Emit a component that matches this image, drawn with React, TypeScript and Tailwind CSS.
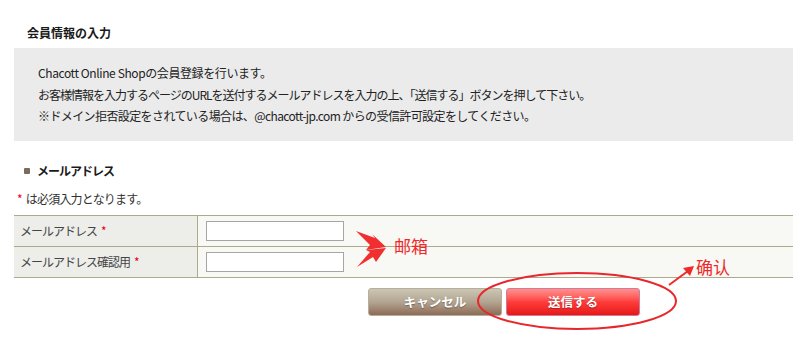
const jp = { fontFamily: '"Noto Sans CJK JP", "Noto Sans", sans-serif' };
const cn = { fontFamily: '"Noto Sans CJK SC", "Noto Sans", sans-serif' };

function Req() {
  return <span className="ml-1 text-[#e60012]">*</span>;
}

export default function App() {
  return (
    <div
      className="relative h-[343px] w-[793px] overflow-hidden bg-white text-[12px] text-[#333]"
      style={jp}
    >
      {/* page heading */}
      <h2 className="pl-[27px] pt-[25px] text-[12px] font-bold leading-4 text-[#1a1a1a]">
        会員情報の入力
      </h2>

      {/* info box */}
      <div className="ml-[14px] mt-[7px] h-[93px] bg-[#ebebeb] pl-[24px] pt-[14px] text-[12px] leading-[21.5px] text-[#222]">
        <p className="tracking-[-0.4px]">Chacott Online Shopの会員登録を行います。</p>
        <p className="tracking-[-1px]">お客様情報を入力するページのURLを送付するメールアドレスを入力の上、「送信する」ボタンを押して下さい。</p>
        <p className="tracking-[-0.6px]">※ドメイン拒否設定をされている場合は、@chacott-jp.com からの受信許可設定をしてください。</p>
      </div>

      {/* section heading */}
      <div className="mt-[22px] flex items-center gap-[7px] pl-[24px] leading-4">
        <span className="h-[6px] w-[6px] rounded-[1px] bg-[#7b6b5c]" />
        <span className="font-bold tracking-[-1px] text-[#1a1a1a]">メールアドレス</span>
      </div>

      <p className="mt-[12px] pl-[17px] leading-4 tracking-[-0.8px] text-[#333]">
        <span className="mr-1 text-[#e60012]">*</span>は必須入力となります。
      </p>

      {/* form table */}
      <table className="ml-[14px] mt-[8px] w-[779px] border-collapse">
        <tbody>
          <tr className="h-[31px]">
            <th className="w-[183px] border border-l-0 border-[#abab8c] bg-[#ededea] pl-[6px] text-left font-normal tracking-[-1px] text-[#444]">
              メールアドレス<Req />
            </th>
            <td className="border border-r-0 border-[#abab8c] bg-[#f8f8f5] pl-[8px]">
              <input className="block h-[20px] w-[138px] border border-[#a6a6a6] bg-white" />
            </td>
          </tr>
          <tr className="h-[31px]">
            <th className="border border-l-0 border-[#abab8c] bg-[#ededea] pl-[6px] text-left font-normal tracking-[-1px] text-[#444]">
              メールアドレス確認用<Req />
            </th>
            <td className="border border-r-0 border-[#abab8c] bg-[#f8f8f5] pl-[8px]">
              <input className="block h-[20px] w-[138px] border border-[#a6a6a6] bg-white" />
            </td>
          </tr>
        </tbody>
      </table>

      {/* buttons */}
      <div className="mt-[10px] flex gap-[4px] pl-[368px]">
        <button className="h-[28px] w-[134px] rounded-[3px] border border-[#b8ad9c] bg-gradient-to-b from-[#cbc6b4] via-[#b3a592] to-[#8c6c56] text-[12.5px] font-bold text-white [text-shadow:0_1px_1px_rgba(0,0,0,0.35)]">
          キャンセル
        </button>
        <button className="h-[28px] w-[134px] rounded-[3px] border border-[#d07a9a] bg-gradient-to-b from-[#ff8f8f] via-[#ff3b3b] to-[#e51616] text-[12.5px] font-bold text-white [text-shadow:0_1px_1px_rgba(0,0,0,0.3)]">
          送信する
        </button>
      </div>

      {/* annotations drawn over the screenshot */}
      <svg className="pointer-events-none absolute left-0 top-0" width="793" height="343">
        <polygon points="356,231 375,238 372,234 386,247 366,250 370,245" fill="#f03030" />
        <polygon points="357,267 370,252 366,250 386,248 376,262 373,257" fill="#f03030" />
        <line x1="669" y1="285" x2="688" y2="271" stroke="#ee2a2a" strokeWidth="2" />
        <polygon points="694,266 683,268 690,276" fill="#ee2a2a" />
        <ellipse cx="577" cy="301" rx="99" ry="28" fill="none" stroke="#e8262c" strokeWidth="2" />
      </svg>
      <span className="absolute left-[394px] top-[236px] text-[17px] leading-5 text-[#f02828]" style={cn}>
        邮箱
      </span>
      <span className="absolute left-[696px] top-[257px] text-[17px] leading-5 text-[#f02828]" style={cn}>
        确认
      </span>
    </div>
  );
}
